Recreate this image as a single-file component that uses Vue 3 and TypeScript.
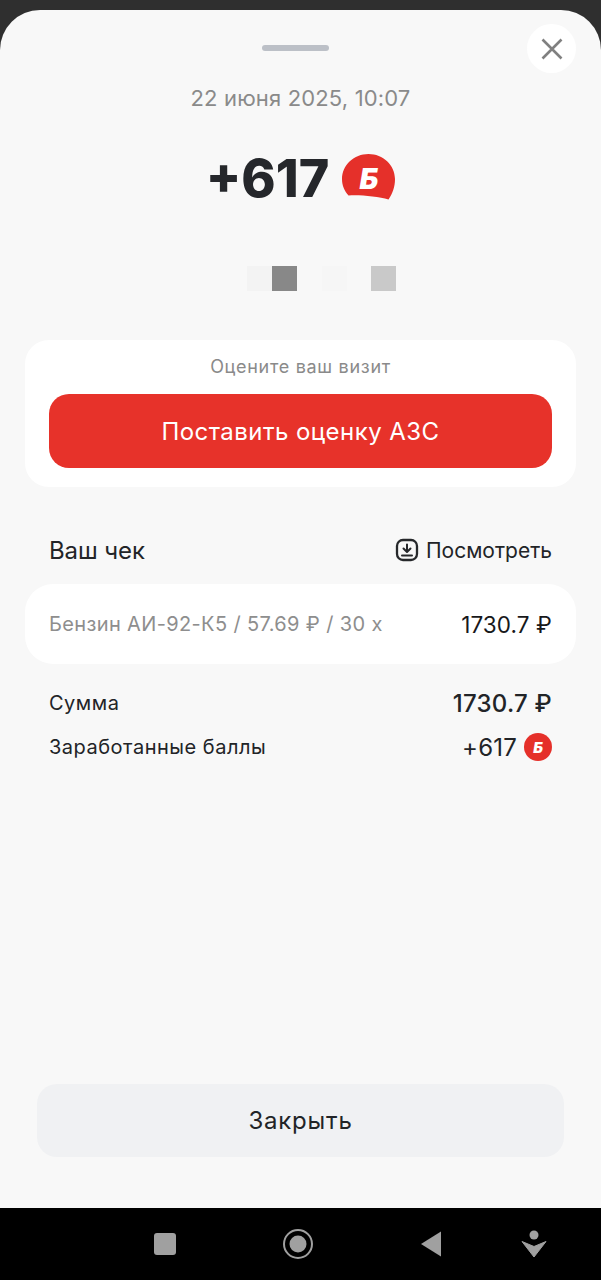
<script setup lang="ts">
const squares = [
  { id: 1, color: '#f3f3f3', gap: 0 },
  { id: 2, color: '#888888', gap: 0 },
  { id: 3, color: '#f6f6f6', gap: 25 },
  { id: 4, color: '#c9c9c9', gap: 24 }
]
</script>

<template>
  <div class="screen">
    <div class="sheet">
      <button class="close" aria-label="Закрыть">
        <svg width="24" height="24" viewBox="0 0 24 24">
          <path d="M2.500 2.500L21.500 21.500M21.500 2.500L2.500 21.500" stroke="#808080" stroke-width="2.600" fill="none" />
        </svg>
      </button>

      <div class="handle"></div>
      <div class="date">22 июня 2025, 10:07</div>

      <div class="points">
        <span class="points-value">+617</span>
        <span class="badge-big">
          <svg width="53" height="47" viewBox="0 0 53 47">
            <path d="M26.500 0C41 0 53 11 53 25C53 33 50.500 39.500 46.500 45.500C36 42.500 17 40.500 6.500 41.500C2.500 37 0 31.500 0 25C0 11 12 0 26.500 0Z" fill="#e5302a" />
          </svg>
          <span class="badge-letter">Б</span>
        </span>
      </div>

      <div class="masked">
        <span
          v-for="sq in squares"
          :key="sq.id"
          class="masked-square"
          :style="{ background: sq.color, marginLeft: sq.gap + 'px' }"
        ></span>
      </div>

      <section class="rate-card">
        <div class="rate-title">Оцените ваш визит</div>
        <button class="rate-button">Поставить оценку АЗС</button>
      </section>

      <div class="receipt-head">
        <span class="receipt-title">Ваш чек</span>
        <span class="receipt-view">
          <svg width="24" height="24" viewBox="0 0 24 24" fill="none" stroke="#26282b" stroke-width="2.300">
            <rect x="2" y="2" width="20" height="20" rx="6" />
            <path d="M12 6.500V13.500M8.500 10.500L12 14L15.500 10.500M7 17.500H17" stroke-width="2" stroke-linecap="round" stroke-linejoin="round" />
          </svg>
          Посмотреть
        </span>
      </div>

      <div class="receipt-card">
        <span class="item-name">Бензин АИ-92-К5 / 57.69 ₽ / 30 x</span>
        <span class="item-price">1730.7 ₽</span>
      </div>

      <div class="row row-sum">
        <span>Сумма</span>
        <span class="sum-value">1730.7 ₽</span>
      </div>
      <div class="row row-earned">
        <span>Заработанные баллы</span>
        <span class="earned">
          +617
          <span class="badge-small">Б</span>
        </span>
      </div>

      <button class="close-button">Закрыть</button>
    </div>

    <nav class="navbar">
      <svg class="nav-icon nav-square" width="22" height="22" viewBox="0 0 22 22">
        <rect width="22" height="22" rx="3" fill="#a0a0a0" />
      </svg>
      <svg class="nav-icon nav-home" width="30" height="30" viewBox="0 0 30 30">
        <circle cx="15" cy="15" r="14" fill="none" stroke="#a0a0a0" stroke-width="2" />
        <circle cx="15" cy="15" r="8.500" fill="#a0a0a0" />
      </svg>
      <svg class="nav-icon nav-back" width="22" height="26" viewBox="0 0 22 26">
        <path d="M21 .500V25.500L1 13Z" fill="#a0a0a0" />
      </svg>
      <svg class="nav-icon nav-extra" width="26" height="28" viewBox="0 0 26 28">
        <circle cx="13" cy="5" r="4.500" fill="#a0a0a0" />
        <path d="M1 11.500L13 16.500L25 11.500L13 27Z" fill="#a0a0a0" stroke="#a0a0a0" stroke-width="1" stroke-linejoin="round" />
      </svg>
    </nav>
  </div>
</template>

<style scoped>
.screen {
  width: 601px;
  height: 1280px;
  display: flex;
  flex-direction: column;
  padding-top: 10px;
  box-sizing: border-box;
  background: #2f2f2f;
  font-family: Inter, "Noto Sans", sans-serif;
  color: #222427;
  overflow: hidden;
}

.sheet {
  position: relative;
  flex: 1;
  display: flex;
  flex-direction: column;
  padding: 35px 25px 51px;
  background: #f8f8f8;
  border-radius: 40px 40px 0 0;
}

.close {
  position: absolute;
  top: 14px;
  right: 25px;
  width: 49px;
  height: 49px;
  display: flex;
  align-items: center;
  justify-content: center;
  padding: 0;
  border: none;
  border-radius: 50%;
  background: #fff;
}

.handle {
  align-self: center;
  width: 67px;
  height: 6px;
  margin-right: 10px;
  border-radius: 3px;
  background: #bcc0c7;
}

.date {
  margin-top: 33px;
  text-align: center;
  font-size: 22px;
  line-height: 28px;
  letter-spacing: 0.15px;
  color: #8a8a8a;
}

.points {
  margin-top: 35px;
  height: 60px;
  display: flex;
  align-items: center;
  justify-content: center;
  gap: 13px;
}

.points-value {
  padding-top: 4px;
  font-size: 52px;
  font-weight: 800;
  line-height: 60px;
  color: #25272b;
}

.badge-big {
  position: relative;
  width: 53px;
  height: 47px;
  display: block;
}

.badge-big svg {
  display: block;
}

.badge-letter {
  position: absolute;
  inset: 2px 0 0;
  display: flex;
  align-items: center;
  justify-content: center;
  font-size: 29px;
  font-weight: 900;
  font-style: italic;
  color: #fff;
}

.masked {
  margin-top: 59px;
  margin-left: 222px;
  display: flex;
}

.masked-square {
  width: 25px;
  height: 25px;
}

.rate-card {
  margin-top: 49px;
  height: 147px;
  box-sizing: border-box;
  padding: 15px 24px 19px;
  display: flex;
  flex-direction: column;
  gap: 15px;
  background: #fff;
  border-radius: 24px;
}

.rate-title {
  text-align: center;
  font-size: 18px;
  line-height: 24px;
  letter-spacing: 0.7px;
  color: #8a8a8a;
}

.rate-button {
  flex: 1;
  border: none;
  border-radius: 20px;
  background: #e7322a;
  color: #fff;
  font-family: inherit;
  font-size: 24px;
  font-weight: 400;
  letter-spacing: 0.45px;
}

.receipt-head {
  margin-top: 46px;
  padding: 0 24px;
  height: 34px;
  display: flex;
  align-items: center;
  justify-content: space-between;
}

.receipt-title {
  font-size: 24px;
  font-weight: 400;
  letter-spacing: -0.1px;
}

.receipt-view {
  display: flex;
  align-items: center;
  gap: 7px;
  font-size: 21px;
}

.receipt-card {
  margin-top: 17px;
  height: 80px;
  padding: 0 24px;
  display: flex;
  align-items: center;
  justify-content: space-between;
  background: #fff;
  border-radius: 28px;
}

.item-name {
  font-size: 20px;
  letter-spacing: 0.36px;
  color: #8e8e8e;
}

.item-price {
  font-size: 22.500px;
  font-weight: 400;
  letter-spacing: 0.1px;
  color: #17181a;
}

.row {
  padding: 0 24px;
  display: flex;
  align-items: center;
  justify-content: space-between;
  font-size: 20px;
  letter-spacing: 0.5px;
}

.row-sum {
  margin-top: 24px;
  height: 30px;
}

.row-earned {
  margin-top: 14px;
  height: 30px;
}

.sum-value {
  font-size: 24px;
  font-weight: 500;
  letter-spacing: 0.25px;
}

.earned {
  display: flex;
  align-items: center;
  gap: 7px;
  font-size: 24px;
  font-weight: 400;
  letter-spacing: 0.2px;
}

.badge-small {
  width: 28px;
  height: 28px;
  display: flex;
  align-items: center;
  justify-content: center;
  border-radius: 50%;
  background: #e5302a;
  color: #fff;
  font-size: 15px;
  font-weight: 900;
  font-style: italic;
  letter-spacing: 0;
}

.close-button {
  margin: auto 12px 0;
  height: 73px;
  border: none;
  border-radius: 20px;
  background: #f0f1f3;
  color: #222427;
  font-family: inherit;
  font-size: 24px;
  font-weight: 400;
  letter-spacing: 0.8px;
}

.navbar {
  height: 72px;
  flex: none;
  display: flex;
  align-items: center;
  padding-left: 154px;
  background: #000;
}

.nav-icon {
  display: block;
  flex: none;
}

.nav-home {
  margin-left: 107px;
}

.nav-back {
  margin-left: 107px;
}

.nav-extra {
  margin-left: 79px;
}
</style>

<style>
html,
body {
  margin: 0;
  background: #2f2f2f;
}
</style>
